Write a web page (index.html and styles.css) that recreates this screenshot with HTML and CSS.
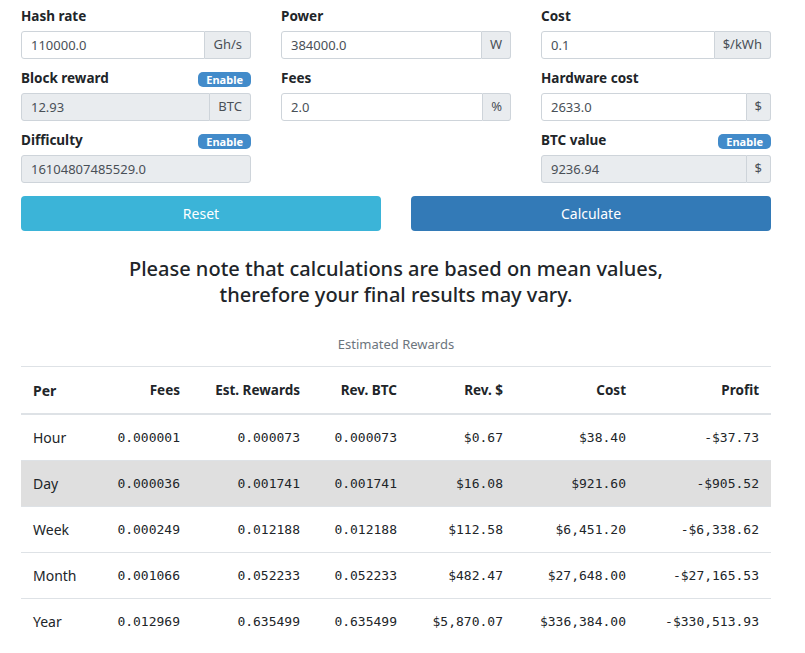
FILE: index.html
```html
<!DOCTYPE html>
<html>
<head>
    <title>Mining Calculator</title>
    <link rel="stylesheet" href="styles.css">
</head>
<body>
    <div class="page">
        <div class="form-grid">
            <div class="group">
                <div class="label-row"><label for="hashrate">Hash rate</label></div>
                <div class="input-group">
                    <input type="text" id="hashrate" value="110000.0">
                    <span class="addon">Gh/s</span>
                </div>
            </div>
            <div class="group">
                <div class="label-row"><label for="power">Power</label></div>
                <div class="input-group">
                    <input type="text" id="power" value="384000.0">
                    <span class="addon">W</span>
                </div>
            </div>
            <div class="group">
                <div class="label-row"><label for="cost">Cost</label></div>
                <div class="input-group">
                    <input type="text" id="cost" value="0.1">
                    <span class="addon">$/kWh</span>
                </div>
            </div>

            <div class="group">
                <div class="label-row">
                    <label for="reward">Block reward</label>
                    <span class="badge">Enable</span>
                </div>
                <div class="input-group">
                    <input type="text" id="reward" value="12.93" disabled>
                    <span class="addon">BTC</span>
                </div>
            </div>
            <div class="group">
                <div class="label-row"><label for="fees">Fees</label></div>
                <div class="input-group">
                    <input type="text" id="fees" value="2.0">
                    <span class="addon">%</span>
                </div>
            </div>
            <div class="group">
                <div class="label-row"><label for="hardware">Hardware cost</label></div>
                <div class="input-group">
                    <input type="text" id="hardware" value="2633.0">
                    <span class="addon">$</span>
                </div>
            </div>

            <div class="group">
                <div class="label-row">
                    <label for="difficulty">Difficulty</label>
                    <span class="badge">Enable</span>
                </div>
                <div class="input-group">
                    <input type="text" id="difficulty" value="16104807485529.0" disabled>
                </div>
            </div>
            <div class="group"></div>
            <div class="group">
                <div class="label-row">
                    <label for="btcvalue">BTC value</label>
                    <span class="badge">Enable</span>
                </div>
                <div class="input-group">
                    <input type="text" id="btcvalue" value="9236.94" disabled>
                    <span class="addon">$</span>
                </div>
            </div>
        </div>

        <div class="buttons">
            <button class="btn btn-reset">Reset</button>
            <button class="btn btn-calc">Calculate</button>
        </div>

        <h2 class="note">Please note that calculations are based on mean values,<br>therefore your final results may vary.</h2>

        <table class="rewards">
            <caption>Estimated Rewards</caption>
            <colgroup>
                <col style="width: 79px">
                <col style="width: 92px">
                <col style="width: 120px">
                <col style="width: 97px">
                <col style="width: 106px">
                <col style="width: 123px">
                <col style="width: 133px">
            </colgroup>
            <thead>
                <tr>
                    <th class="left">Per</th>
                    <th>Fees</th>
                    <th>Est. Rewards</th>
                    <th>Rev. BTC</th>
                    <th>Rev. $</th>
                    <th>Cost</th>
                    <th>Profit</th>
                </tr>
            </thead>
            <tbody>
                <tr>
                    <td class="left">Hour</td>
                    <td>0.000001</td><td>0.000073</td><td>0.000073</td>
                    <td>$0.67</td><td>$38.40</td><td>-$37.73</td>
                </tr>
                <tr class="striped">
                    <td class="left">Day</td>
                    <td>0.000036</td><td>0.001741</td><td>0.001741</td>
                    <td>$16.08</td><td>$921.60</td><td>-$905.52</td>
                </tr>
                <tr>
                    <td class="left">Week</td>
                    <td>0.000249</td><td>0.012188</td><td>0.012188</td>
                    <td>$112.58</td><td>$6,451.20</td><td>-$6,338.62</td>
                </tr>
                <tr>
                    <td class="left">Month</td>
                    <td>0.001066</td><td>0.052233</td><td>0.052233</td>
                    <td>$482.47</td><td>$27,648.00</td><td>-$27,165.53</td>
                </tr>
                <tr>
                    <td class="left">Year</td>
                    <td>0.012969</td><td>0.635499</td><td>0.635499</td>
                    <td>$5,870.07</td><td>$336,384.00</td><td>-$330,513.93</td>
                </tr>
            </tbody>
        </table>
    </div>
</body>
</html>
```

FILE: styles.css
```css
/* Base */
body {
    margin: 0;
    font-family: "Noto Sans", "Open Sans", sans-serif;
    font-size: 14px;
    line-height: 1.5;
    color: #212529;
    background: #fff;
}

.page {
    width: 750px;
    margin-left: 21px;
    padding-top: 6px;
}

/* Form */
.form-grid {
    display: grid;
    grid-template-columns: repeat(3, minmax(0, 1fr));
    column-gap: 30px;
}

.group {
    margin-bottom: 9px;
}

.label-row {
    display: flex;
    justify-content: space-between;
    align-items: center;
    height: 21px;
    margin-bottom: 4px;
}

label {
    font-weight: bold;
    font-size: 13.5px;
}

.badge {
    background-color: #428bca;
    color: #fff;
    font-size: 11px;
    font-weight: bold;
    line-height: 15px;
    padding: 0 8px;
    border-radius: 5px;
    margin-top: 2px;
}

.input-group {
    display: flex;
    height: 28px;
}

.input-group input {
    flex: 1;
    width: 0;
    min-width: 0;
    font-family: inherit;
    font-size: 13px;
    color: #495057;
    padding: 0 9px;
    border: 1px solid #ced4da;
    border-radius: 3px;
    background: #fff;
    margin: 0;
}

.input-group input:disabled {
    background: #e9ecef;
}

.input-group input:not(:last-child) {
    border-top-right-radius: 0;
    border-bottom-right-radius: 0;
}

.addon {
    display: flex;
    align-items: center;
    padding: 0 8px;
    font-size: 13px;
    color: #495057;
    background: #e9ecef;
    border: 1px solid #ced4da;
    border-left: none;
    border-radius: 0 3px 3px 0;
}

/* Buttons */
.buttons {
    display: grid;
    grid-template-columns: 1fr 1fr;
    column-gap: 30px;
    margin-top: 4px;
}

.btn {
    height: 35px;
    border: none;
    border-radius: 4px;
    color: #fff;
    font-family: inherit;
    font-size: 14px;
    cursor: pointer;
}

.btn-reset {
    background-color: #3bb4d8;
}

.btn-calc {
    background-color: #337ab7;
}

/* Note */
.note {
    margin: 25px 0 0;
    text-align: center;
    font-size: 20px;
    font-weight: 500;
    line-height: 26px;
}

/* Table */
.rewards {
    width: 100%;
    border-collapse: collapse;
    table-layout: fixed;
    margin-top: 26px;
}

.rewards caption {
    caption-side: top;
    color: #6c757d;
    font-size: 13px;
    line-height: 20px;
    padding-bottom: 12px;
}

.rewards th,
.rewards td {
    padding: 12px;
    text-align: right;
    line-height: 21px;
    border-top: 1px solid #dee2e6;
    white-space: nowrap;
}

.rewards th {
    font-size: 13.5px;
    padding-top: 13px;
}

.rewards thead th {
    border-bottom: 2px solid #dee2e6;
}

.rewards td {
    font-family: "DejaVu Sans Mono", monospace;
    font-size: 13px;
}

.rewards .left {
    text-align: left;
    font-family: inherit;
    font-size: 14px;
}

.rewards tbody tr:first-child td {
    border-top: none;
}

.rewards .striped {
    background-color: #dfdfdf;
}
```
